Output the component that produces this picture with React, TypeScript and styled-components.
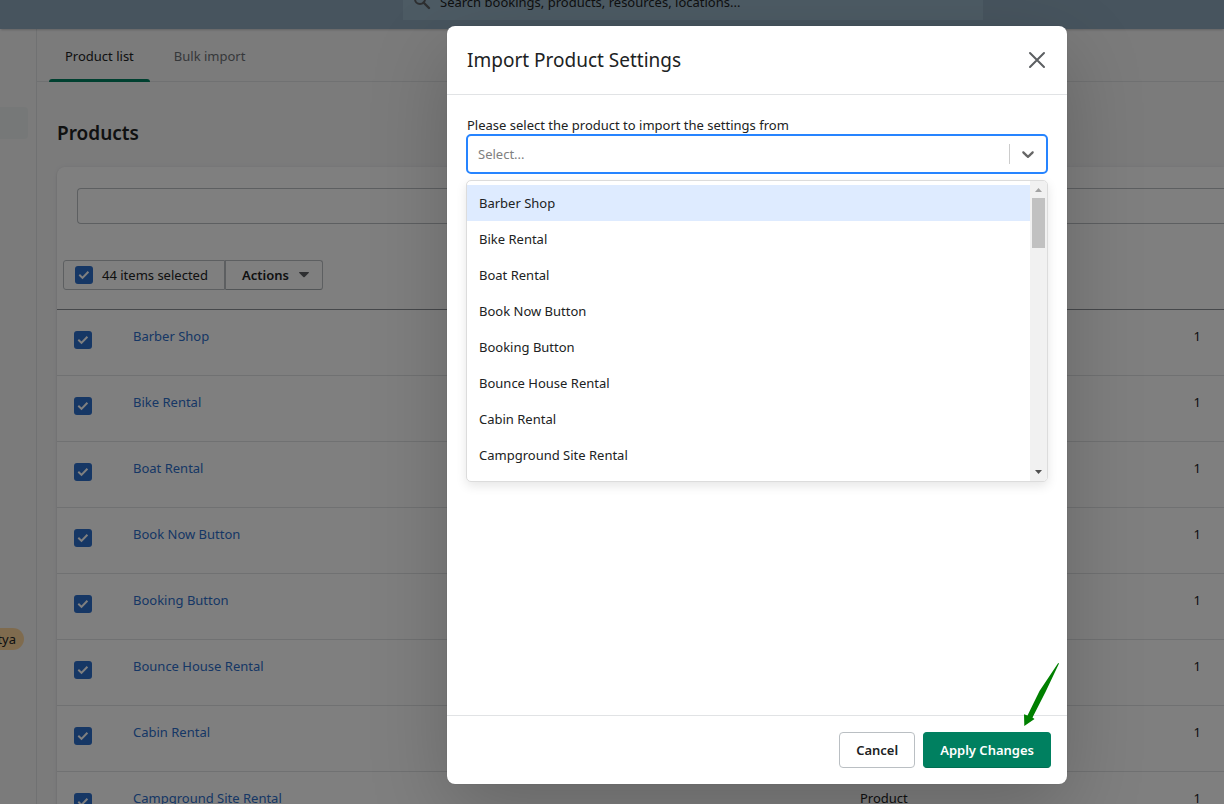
import React, { useState } from "react";
import styled, { createGlobalStyle } from "styled-components";

const GlobalStyle = createGlobalStyle`
  *, *::before, *::after { box-sizing: border-box; }
  body {
    margin: 0;
    background: #f6f6f7;
    color: #202223;
    font-family: "Noto Sans", "Open Sans", sans-serif;
    font-size: 13px;
    line-height: 20px;
  }
  button, input { font: inherit; color: inherit; }
`;

const Page = styled.div`
  position: relative;
  display: flex;
  flex-direction: column;
  height: 100vh;
  overflow: hidden;
`;

const TopBar = styled.header`
  display: flex;
  flex: none;
  align-items: flex-end;
  height: 29px;
  padding: 0 241px 9px 403px;
  background: #8ea9bd;
  box-shadow: 0 2px 2px -1px rgba(0, 0, 0, 0.2);
  z-index: 1;
`;

const GlobalSearch = styled.label`
  display: flex;
  flex: 1;
  align-items: center;
  gap: 8px;
  height: 36px;
  padding: 0 9px;
  background: #9ab6c9;
`;

const SearchIcon = styled.svg`
  align-self: flex-start;
  margin-top: 8px;
`;

const GlobalSearchInput = styled.input`
  flex: 1;
  min-width: 0;
  padding: 0;
  border: 0;
  outline: 0;
  background: transparent;
  &::placeholder { color: #202223; opacity: 1; }
`;

const Body = styled.div`
  display: flex;
  flex: 1;
  min-height: 0;
`;

const Sidebar = styled.nav`
  display: flex;
  flex: none;
  flex-direction: column;
  align-items: flex-start;
  justify-content: space-between;
  width: 37px;
  padding: 78px 0 154px;
  border-right: 1px solid #e1e3e5;
  overflow: hidden;
`;

const NavItem = styled.a`
  width: 28px;
  height: 32px;
  border-radius: 0 4px 4px 0;
  background: #edf1f0;
`;

const Pill = styled.span`
  display: flex;
  justify-content: flex-end;
  width: 24px;
  padding: 1px 8px 1px 0;
  border-radius: 0 11px 11px 0;
  background: #ffd79d;
`;

const Main = styled.main`
  flex: 1;
  min-width: 0;
`;

const Tabs = styled.div`
  display: flex;
  gap: 8px;
  height: 53px;
  padding: 0 12px;
  border-bottom: 1px solid #e1e3e5;
`;

const Tab = styled.button<{ $active?: boolean }>`
  position: relative;
  height: 53px;
  padding: 0 16px;
  border: 0;
  background: none;
  color: ${(p) => (p.$active ? "#202223" : "#6d7175")};
  &::after {
    content: "";
    position: absolute;
    inset: auto 0 0;
    height: 3px;
    border-radius: 3px 3px 0 0;
    background: ${(p) => (p.$active ? "#008060" : "transparent")};
  }
`;

const Heading = styled.h1`
  margin: 0;
  padding: 37px 20px 20px;
  font-size: 19px;
  font-weight: 600;
  line-height: 28px;
`;

const Card = styled.section`
  margin-left: 20px;
  border-radius: 8px 0 0 0;
  background: #fff;
  box-shadow: 0 0 5px rgba(23, 24, 24, 0.05), 0 1px 2px rgba(0, 0, 0, 0.15);
`;

const Filter = styled.div`
  display: flex;
  padding: 21px 0 36px 20px;
`;

const FilterInput = styled.input`
  flex: 1;
  height: 36px;
  padding: 0 12px;
  border: 1px solid #babfc3;
  border-right: 0;
  border-radius: 4px 0 0 4px;
  background: #fff;
`;

const BulkBar = styled.div`
  display: flex;
  padding: 0 6px 19px;
`;

const BulkSelect = styled.label`
  display: flex;
  align-items: center;
  gap: 9px;
  height: 30px;
  padding: 0 16px 0 11px;
  border: 1px solid #babfc3;
  border-radius: 3px 0 0 3px;
`;

const ActionsButton = styled.button`
  display: flex;
  align-items: center;
  gap: 10px;
  height: 30px;
  padding: 0 13px 0 16px;
  border: 1px solid #babfc3;
  border-bottom-color: #a5aaae;
  border-radius: 0 3px 3px 0;
  background: #fff;
  font-weight: 600;
`;

const CheckWrap = styled.span`
  display: grid;
  flex: none;
  width: 18px;
  height: 18px;
  & > * { grid-area: 1 / 1; }
  svg { pointer-events: none; }
`;

const CheckInput = styled.input`
  appearance: none;
  width: 18px;
  height: 18px;
  margin: 0;
  border-radius: 3px;
  background: #2c6ecb;
  &:not(:checked) { background: #fff; border: 2px solid #8c9196; }
`;

const Table = styled.table`
  width: 100%;
  border-collapse: collapse;
  border-top: 1px solid #8c9196;
  table-layout: fixed;
`;

const Cell = styled.td<{ $width?: number; $end?: boolean }>`
  width: ${(p) => (p.$width ? p.$width + "px" : "auto")};
  height: 66px;
  padding: 16px ${(p) => (p.$end ? 23 : 0)}px 0 0;
  border-bottom: 1px solid #e1e3e5;
  text-align: ${(p) => (p.$end ? "right" : "left")};
  vertical-align: top;
`;

const CheckCell = styled(Cell)`
  padding: 21px 0 0 17px;
`;

const Link = styled.a`
  color: #2c6ecb;
  text-decoration: none;
`;

const Backdrop = styled.div`
  position: absolute;
  inset: 0;
  z-index: 2;
  display: flex;
  align-items: flex-start;
  justify-content: center;
  padding: 26px 0 20px 290px;
  background: rgba(0, 0, 0, 0.5);
`;

const Dialog = styled.div`
  width: 100%;
  max-width: 620px;
  border-radius: 8px;
  background: #fff;
  box-shadow: 0 26px 80px rgba(0, 0, 0, 0.2), 0 0 1px rgba(0, 0, 0, 0.2);
`;

const DialogHeader = styled.div`
  display: flex;
  align-items: center;
  justify-content: space-between;
  padding: 20px;
  border-bottom: 1px solid #e1e3e5;
`;

const DialogTitle = styled.h2`
  margin: 0;
  font-size: 19px;
  font-weight: 400;
  line-height: 28px;
`;

const CloseButton = styled.button`
  display: flex;
  padding: 0;
  border: 0;
  background: none;
`;

const DialogBody = styled.div`
  min-height: 620px;
  padding: 20px;
`;

const FieldLabel = styled.label`
  display: block;
`;

const Combo = styled.div`
  position: relative;
  margin: -1px;
`;

const Control = styled.div`
  display: flex;
  align-items: center;
  height: 40px;
  border: 2px solid #2684ff;
  border-radius: 5px;
`;

const ComboInput = styled.input`
  flex: 1;
  min-width: 0;
  padding: 0 10px;
  border: 0;
  outline: 0;
  background: none;
  &::placeholder { color: #808080; opacity: 1; }
`;

const Separator = styled.span`
  width: 1px;
  height: 20px;
  background: #ccc;
`;

const ToggleButton = styled.button`
  display: flex;
  padding: 8px;
  border: 0;
  background: none;
`;

const Menu = styled.div`
  position: absolute;
  inset: 46px 0 auto;
  display: flex;
  height: 302px;
  border: 1px solid #dcdcdc;
  border-radius: 5px;
  background: #fff;
  box-shadow: 0 4px 11px rgba(0, 0, 0, 0.1);
  overflow: hidden;
`;

const Options = styled.ul`
  flex: 1;
  margin: 0;
  padding: 4px 0;
  list-style: none;
  overflow: hidden;
`;

const Option = styled.li<{ $focused: boolean }>`
  padding: 8px 12px;
  background: ${(p) => (p.$focused ? "#deebff" : "transparent")};
`;

const ScrollTrack = styled.div`
  display: flex;
  flex: none;
  flex-direction: column;
  align-items: center;
  width: 17px;
  background: #f1f1f1;
`;

const ScrollThumb = styled.div`
  width: 13px;
  height: 50px;
  margin-bottom: auto;
  background: #c1c1c1;
`;

const DialogFooter = styled.div`
  position: relative;
  display: flex;
  justify-content: flex-end;
  gap: 8px;
  padding: 16px;
  border-top: 1px solid #e1e3e5;
`;

const Button = styled.button<{ $primary?: boolean }>`
  height: 36px;
  padding: 0 16px;
  border: 1px solid ${(p) => (p.$primary ? "#008060" : "#babfc3")};
  border-bottom-color: ${(p) => (p.$primary ? "#006e52" : "#babfc3")};
  border-radius: 4px;
  background: ${(p) => (p.$primary ? "#008060" : "#fff")};
  color: ${(p) => (p.$primary ? "#fff" : "#202223")};
  font-weight: 600;
`;

const Pointer = styled.svg`
  position: absolute;
  right: 8px;
  bottom: 57px;
  pointer-events: none;
`;

const products = [
  "Barber Shop",
  "Bike Rental",
  "Boat Rental",
  "Book Now Button",
  "Booking Button",
  "Bounce House Rental",
  "Cabin Rental",
  "Campground Site Rental",
];

function Checkbox({ label }: { label?: string }) {
  return (
    <CheckWrap>
      <CheckInput type="checkbox" defaultChecked aria-label={label} />
      <svg width="18" height="18" viewBox="0 0 18 18" fill="none" stroke="#fff" strokeWidth="2">
        <path d="M4.300 8.800 7.500 11.900 13.400 5.700" />
      </svg>
    </CheckWrap>
  );
}

function ScrollArrow({ up }: { up?: boolean }) {
  return (
    <svg width="17" height="17" viewBox="0 0 17 17" fill={up ? "#a3a3a3" : "#505050"}>
      <path d={up ? "M5 11h7L8.500 7z" : "M5 6h7L8.500 10z"} />
    </svg>
  );
}

export default function App() {
  const [focused, setFocused] = useState(0);
  return (
    <>
      <GlobalStyle />
      <Page>
        <TopBar>
          <GlobalSearch>
            <SearchIcon width="20" height="20" viewBox="0 0 20 20" fill="none" stroke="#5c5f62" aria-hidden="true">
              <circle cx="8" cy="7" r="5" strokeWidth="2" />
              <path d="M11.500 10.500 17 16" strokeWidth="2.400" strokeLinecap="round" />
            </SearchIcon>
            <GlobalSearchInput aria-label="Search" placeholder="Search bookings, products, resources, locations..." />
          </GlobalSearch>
        </TopBar>
        <Body>
          <Sidebar>
            <NavItem href="#" aria-label="Products" />
            <Pill>tya</Pill>
          </Sidebar>
          <Main>
            <Tabs>
              <Tab $active>Product list</Tab>
              <Tab>Bulk import</Tab>
            </Tabs>
            <Heading>Products</Heading>
            <Card>
              <Filter>
                <FilterInput aria-label="Filter products" />
              </Filter>
              <BulkBar>
                <BulkSelect>
                  <Checkbox />
                  44 items selected
                </BulkSelect>
                <ActionsButton>
                  Actions
                  <svg width="10" height="6" viewBox="0 0 10 6" fill="#5c5f62">
                    <path d="M.5 0h9q.8.300.2 1L5.700 5q-.7.700-1.400 0L.3 1Q-.2.300.5 0z" />
                  </svg>
                </ActionsButton>
              </BulkBar>
              <Table>
                <tbody>
                  {products.map((name) => (
                    <tr key={name}>
                      <CheckCell $width={76}>
                        <Checkbox label={name} />
                      </CheckCell>
                      <Cell>
                        <Link href="#">{name}</Link>
                      </Cell>
                      <Cell $width={182}>Product</Cell>
                      <Cell $width={182} $end>
                        1
                      </Cell>
                    </tr>
                  ))}
                </tbody>
              </Table>
            </Card>
          </Main>
        </Body>
        <Backdrop>
          <Dialog role="dialog" aria-modal="true" aria-labelledby="dialog-title">
            <DialogHeader>
              <DialogTitle id="dialog-title">Import Product Settings</DialogTitle>
              <CloseButton aria-label="Close">
                <svg width="20" height="20" viewBox="0 0 20 20" fill="none" stroke="#5c5f62" strokeWidth="2" strokeLinecap="round">
                  <path d="M3 3 17 17M17 3 3 17" />
                </svg>
              </CloseButton>
            </DialogHeader>
            <DialogBody>
              <FieldLabel htmlFor="source">Please select the product to import the settings from</FieldLabel>
              <Combo>
                <Control>
                  <ComboInput id="source" role="combobox" aria-expanded="true" aria-controls="source-options" placeholder="Select..." />
                  <Separator />
                  <ToggleButton aria-label="Toggle options">
                    <svg width="20" height="20" viewBox="0 0 20 20" fill="#666">
                      <path d="M4.516 7.548c0.436-0.446 1.043-0.481 1.576 0l3.908 3.747 3.908-3.747c0.533-0.481 1.141-0.446 1.574 0 0.436 0.445 0.408 1.197 0 1.615-0.406 0.418-4.695 4.502-4.695 4.502-0.217 0.223-0.502 0.335-0.787 0.335s-0.570-0.112-0.789-0.335c0 0-4.287-4.084-4.695-4.502s-0.436-1.170 0-1.615z" />
                    </svg>
                  </ToggleButton>
                </Control>
                <Menu>
                  <Options id="source-options" role="listbox">
                    {products.map((name, i) => (
                      <Option key={name} role="option" aria-selected={i === focused} $focused={i === focused} onMouseEnter={() => setFocused(i)}>
                        {name}
                      </Option>
                    ))}
                  </Options>
                  <ScrollTrack aria-hidden="true">
                    <ScrollArrow up />
                    <ScrollThumb />
                    <ScrollArrow />
                  </ScrollTrack>
                </Menu>
              </Combo>
            </DialogBody>
            <DialogFooter>
              <Button>Cancel</Button>
              <Button $primary>Apply Changes</Button>
              <Pointer width="36" height="64" viewBox="0 0 36 64" fill="#008000" aria-hidden="true">
                <path d="M35.200 0 36 .5 22.500 29 9.500 54.500 11.500 56 1.300 63 1 51.300 4.500 52.500 16.500 28z" />
              </Pointer>
            </DialogFooter>
          </Dialog>
        </Backdrop>
      </Page>
    </>
  );
}
